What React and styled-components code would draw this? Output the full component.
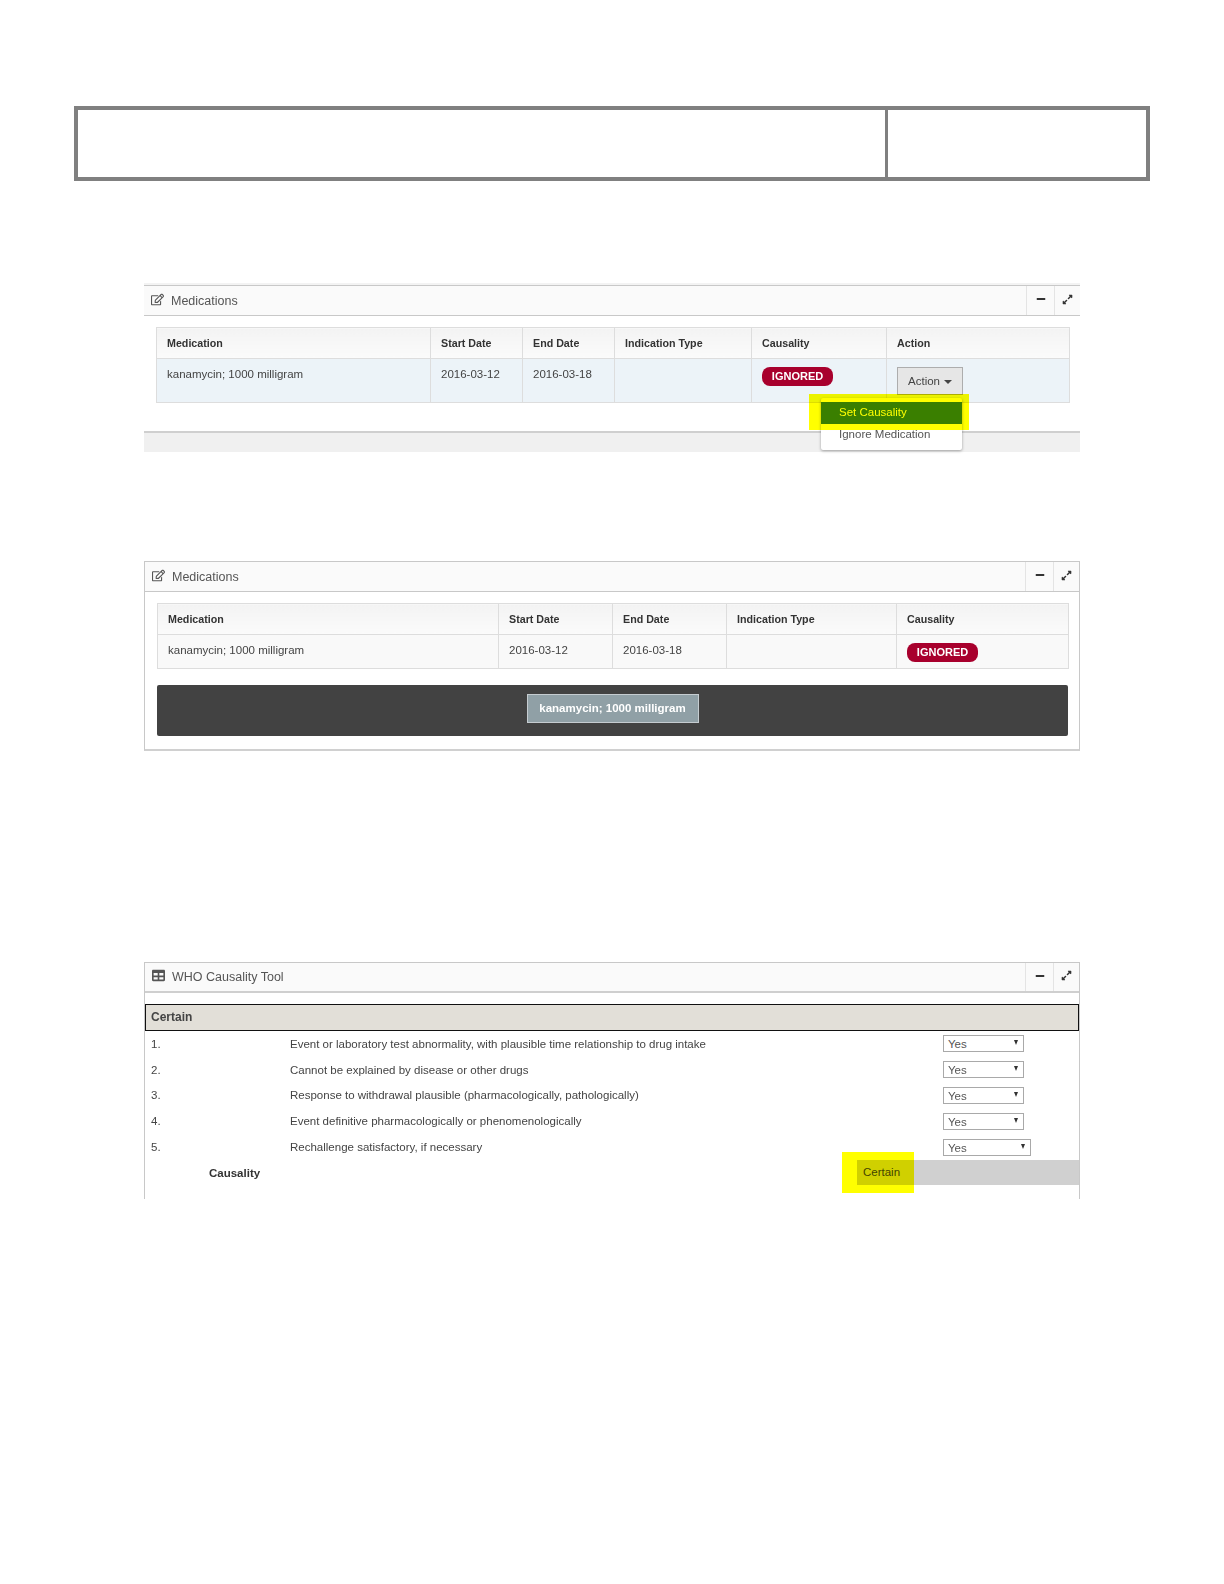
import React from "react";
import styled, { createGlobalStyle } from "styled-components";
import { FaRegEdit, FaTable, FaMinus, FaExpandAlt } from "react-icons/fa";

const medColumns = [274, 92, 92, 137, 135, 183];
const causalityColumns = [341, 114, 114, 170, 172];

const criteria = [
  "Event or laboratory test abnormality, with plausible time relationship to drug intake",
  "Cannot be explained by disease or other drugs",
  "Response to withdrawal plausible (pharmacologically, pathologically)",
  "Event definitive pharmacologically or phenomenologically",
  "Rechallenge satisfactory, if necessary",
];

const PanelHeader = ({ icon, title, $short }) => (
  <Header $short={$short}>
    <Title>
      {icon}
      <span>{title}</span>
    </Title>
    <HeaderBtn>
      <FaMinus size={10} />
    </HeaderBtn>
    <HeaderBtn $narrow>
      <FaExpandAlt size={11} />
    </HeaderBtn>
  </Header>
);

export default function App() {
  return (
    <Page>
      <GlobalStyle />
      <EmptyTable>
        <div />
        <div />
      </EmptyTable>

      <Panel $gap={104}>
        <TopEdge />
        <PanelHeader icon={<FaRegEdit size={13} />} title="Medications" />
        <Body $bottom={28}>
          <Table $width={913}>
            <colgroup>
              {medColumns.map((w) => (
                <col key={w + Math.random()} width={w} />
              ))}
            </colgroup>
            <thead>
              <tr>
                <Th>Medication</Th>
                <Th>Start Date</Th>
                <Th>End Date</Th>
                <Th>Indication Type</Th>
                <Th>Causality</Th>
                <Th>Action</Th>
              </tr>
            </thead>
            <tbody>
              <Row $height={44} $bg="#ecf3f8">
                <Td>kanamycin; 1000 milligram</Td>
                <Td>2016-03-12</Td>
                <Td>2016-03-18</Td>
                <Td />
                <Td>
                  <Badge>IGNORED</Badge>
                </Td>
                <Td>
                  <ActionWrap>
                    <ActionButton>
                      Action <Caret />
                    </ActionButton>
                    <Menu>
                      <MenuItem $active>Set Causality</MenuItem>
                      <MenuItem>Ignore Medication</MenuItem>
                    </Menu>
                    <MenuHighlight />
                  </ActionWrap>
                </Td>
              </Row>
            </tbody>
          </Table>
        </Body>
        <FooterBand />
      </Panel>

      <Panel $gap={109} $boxed>
        <PanelHeader icon={<FaRegEdit size={13} />} title="Medications" />
        <Body $bottom={13}>
          <Table $width={911}>
            <colgroup>
              {causalityColumns.map((w) => (
                <col key={w + Math.random()} width={w} />
              ))}
            </colgroup>
            <thead>
              <tr>
                <Th>Medication</Th>
                <Th>Start Date</Th>
                <Th>End Date</Th>
                <Th>Indication Type</Th>
                <Th>Causality</Th>
              </tr>
            </thead>
            <tbody>
              <Row $height={34} $bg="#f9f9f9">
                <Td>kanamycin; 1000 milligram</Td>
                <Td>2016-03-12</Td>
                <Td>2016-03-18</Td>
                <Td />
                <Td>
                  <Badge>IGNORED</Badge>
                </Td>
              </Row>
            </tbody>
          </Table>
          <DarkBar>
            <DrugButton>kanamycin; 1000 milligram</DrugButton>
          </DarkBar>
        </Body>
      </Panel>

      <Panel $gap={211} $boxed $open>
        <PanelHeader icon={<FaTable size={13} />} title="WHO Causality Tool" $short />
        <ToolBody>
          <CategoryBar>Certain</CategoryBar>
          {criteria.map((text, i) => (
            <CriteriaRow key={text}>
              <span>{i + 1}.</span>
              <span>{text}</span>
              <Select $wide={i === 4}>Yes</Select>
            </CriteriaRow>
          ))}
          <ResultRow>
            <ResultLabel>Causality</ResultLabel>
            <ResultValue>
              Certain
              <ResultHighlight />
            </ResultValue>
          </ResultRow>
        </ToolBody>
      </Panel>
    </Page>
  );
}

const GlobalStyle = createGlobalStyle`
  html, body {
    margin: 0;
    background: #fff;
  }
  * {
    box-sizing: border-box;
  }
`;

const Page = styled.div`
  width: 1224px;
  height: 1584px;
  padding: 106px 144px 0;
  font-family: "Liberation Sans", Arial, sans-serif;
  color: #333;
`;

const EmptyTable = styled.div`
  display: grid;
  grid-template-columns: 807px 1fr;
  gap: 3px;
  width: 1076px;
  height: 75px;
  margin-left: -70px;
  border: 4px solid #808080;
  background: #808080;

  div {
    background: #fff;
  }
`;

const Panel = styled.section`
  width: 936px;
  margin-top: ${(p) => p.$gap}px;
  border-left: ${(p) => (p.$boxed ? "1px solid #c8c8c8" : "none")};
  border-right: ${(p) => (p.$boxed ? "1px solid #c8c8c8" : "none")};
  border-bottom: ${(p) => (p.$boxed && !p.$open ? "2px solid #d0d0d0" : "none")};
`;

const TopEdge = styled.div`
  height: 2px;
  margin-top: -2px;
  background: #f3f3f3;
`;

const Header = styled.header`
  display: flex;
  height: ${(p) => (p.$short ? 31 : 31)}px;
  background: #fafafa;
  border-top: 1px solid #c8c8c8;
  border-bottom: ${(p) => (p.$short ? "2px solid #cfcfcf" : "1px solid #c8c8c8")};
`;

const Title = styled.div`
  flex: 1;
  display: flex;
  align-items: center;
  gap: 7px;
  padding-left: 7px;
  font-size: 12.5px;
  color: #555;

  svg {
    color: #555;
    margin-top: -3px;
  }
`;

const HeaderBtn = styled.div`
  display: flex;
  align-items: center;
  justify-content: center;
  width: ${(p) => (p.$narrow ? 26 : 28)}px;
  padding-bottom: 3px;
  border-left: 1px solid #e4e4e4;
  color: #333;
`;

const Body = styled.div`
  padding: 11px 11px ${(p) => p.$bottom}px 12px;
`;

const Table = styled.table`
  width: ${(p) => p.$width}px;
  table-layout: fixed;
  border-collapse: collapse;
  font-size: 11.5px;
`;

const Th = styled.th`
  height: 31px;
  padding: 0 10px;
  text-align: left;
  font-size: 10.7px;
  font-weight: 700;
  color: #333;
  background: linear-gradient(#f3f3f3, #fbfbfb);
  border: 1px solid #ddd;
`;

const Row = styled.tr`
  height: ${(p) => p.$height}px;
  background: ${(p) => p.$bg};
`;

const Td = styled.td`
  padding: 7px 10px 0;
  vertical-align: top;
  line-height: 16px;
  color: #444;
  border: 1px solid #ddd;
`;

const Badge = styled.span`
  display: block;
  width: 71px;
  height: 19px;
  margin-top: 1px;
  border-radius: 8px;
  background: #a8002d;
  color: #fff;
  font-size: 11px;
  font-weight: 700;
  line-height: 19px;
  text-align: center;
`;

const ActionWrap = styled.div`
  position: relative;
  width: 66px;
  margin-top: 1px;
`;

const ActionButton = styled.div`
  display: flex;
  align-items: center;
  justify-content: center;
  gap: 4px;
  height: 28px;
  background: #e6e6e6;
  border: 1px solid #adadad;
  font-size: 11.5px;
  color: #444;
`;

const Caret = styled.i`
  width: 0;
  height: 0;
  margin-top: 2px;
  border-top: 4px solid #444;
  border-left: 4px solid transparent;
  border-right: 4px solid transparent;
`;

const Menu = styled.div`
  position: absolute;
  left: -76px;
  top: 31px;
  width: 141px;
  height: 52px;
  padding-top: 4px;
  background: #fff;
  border-radius: 2px;
  box-shadow: 0 1px 3px rgba(0, 0, 0, 0.35);
`;

const MenuItem = styled.div`
  height: 22px;
  padding-left: 18px;
  font-size: 11.5px;
  line-height: ${(p) => (p.$active ? 21 : 20)}px;
  color: ${(p) => (p.$active ? "#fff" : "#555")};
  background: ${(p) => (p.$active ? "#3a7fb8" : "transparent")};
`;

const MenuHighlight = styled.div`
  position: absolute;
  left: -88px;
  top: 27px;
  width: 160px;
  height: 36px;
  background: #ffff00;
  mix-blend-mode: multiply;
`;

const FooterBand = styled.div`
  height: 21px;
  background: #f0f0f0;
  border-top: 2px solid #cfcfcf;
`;

const DarkBar = styled.div`
  display: flex;
  justify-content: center;
  width: 911px;
  height: 51px;
  margin-top: 16px;
  padding-top: 9px;
  background: #424242;
  border-radius: 2px;
`;

const DrugButton = styled.div`
  width: 172px;
  height: 29px;
  background: #90a0a6;
  border: 1px solid #c5ccd0;
  color: #fff;
  font-size: 11.5px;
  font-weight: 700;
  line-height: 27px;
  text-align: center;
`;

const ToolBody = styled.div`
  padding: 11px 0 14px;
  font-size: 11.5px;
  color: #444;
`;

const CategoryBar = styled.div`
  height: 27px;
  margin-bottom: 0;
  padding-left: 5px;
  background: #e2dfd8;
  border: 1px solid #111;
  font-size: 12px;
  font-weight: 700;
  line-height: 24px;
  color: #444;
`;

const CriteriaRow = styled.div`
  display: grid;
  grid-template-columns: 139px 653px auto;
  align-items: center;
  height: 25.8px;
  padding-left: 6px;
`;

const Select = styled.div`
  position: relative;
  width: ${(p) => (p.$wide ? 88 : 81)}px;
  height: 17px;
  padding-left: 4px;
  background: #fff;
  border: 1px solid #a9a9a9;
  font-size: 11.5px;
  line-height: 16px;
  color: #555;

  &::after {
    content: "";
    position: absolute;
    right: 5px;
    top: 4px;
    border-top: 5px solid #333;
    border-left: 2.5px solid transparent;
    border-right: 2.5px solid transparent;
  }
`;

const ResultRow = styled.div`
  display: flex;
  align-items: center;
  height: 25.3px;
  padding-left: 64px;
`;

const ResultLabel = styled.div`
  flex: 1;
  font-weight: 700;
  color: #333;
`;

const ResultValue = styled.div`
  position: relative;
  width: 222px;
  height: 100%;
  padding-left: 6px;
  background: #d0d0d0;
  line-height: 25px;
  color: #444;
`;

const ResultHighlight = styled.div`
  position: absolute;
  left: -15px;
  top: -8px;
  width: 72px;
  height: 41px;
  background: #ffff00;
  mix-blend-mode: multiply;
`;
